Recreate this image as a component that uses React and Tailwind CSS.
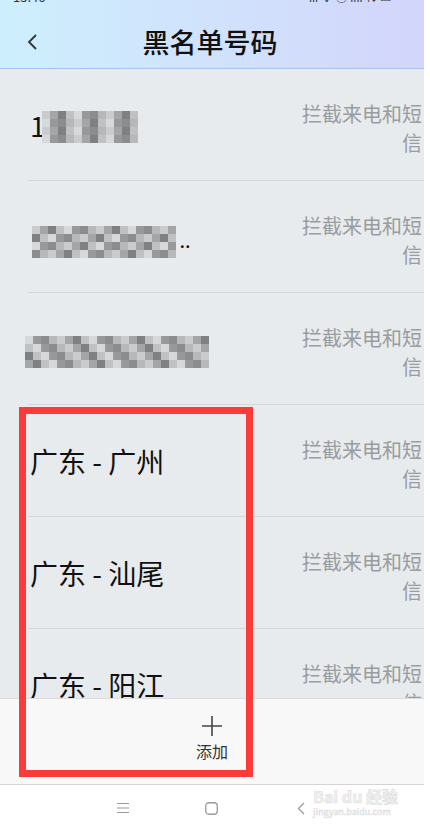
import React from 'react';

const FONT = { fontFamily: '"Noto Sans CJK SC", "Noto Sans", sans-serif' };

const GRAYS = ['#c9cbcd', '#a3a5a7', '#8a8c8e', '#b6b8ba', '#d6d8da', '#97999b', '#7e8082', '#bfc1c3'];

// pixelated block used to hide phone numbers
const Mosaic = ({ cols, rows, cell = 8, seed = 1 }) => {
  const cells = [];
  let s = seed;
  for (let r = 0; r < rows; r++) {
    for (let c = 0; c < cols; c++) {
      s = (s * 9301 + 49297) % 233280;
      cells.push(
        <rect key={r + '-' + c} x={c * cell} y={r * cell} width={cell} height={cell} fill={GRAYS[s % GRAYS.length]} />
      );
    }
  }
  return (
    <svg width={cols * cell} height={rows * cell} className="block">
      {cells}
    </svg>
  );
};

const rows = [
  { id: 1, text: '100', mosaic: { cols: 12, rows: 4, seed: 3, left: 12, top: 0 } },
  { id: 2, text: '(', tail: '..', mosaic: { cols: 18, rows: 4, seed: 11, left: 2, top: 3 } },
  { id: 3, text: '1', mosaic: { cols: 23, rows: 4, seed: 7, left: -5, top: 1 } },
  { id: 4, text: '广东 - 广州' },
  { id: 5, text: '广东 - 汕尾' },
  { id: 6, text: '广东 - 阳江' },
];

const Row = ({ row }) => (
  <div className="ml-[28px] h-[112px] shrink-0 border-b border-[#d5d8db] flex items-center justify-between pl-[2px] pr-[2px]">
    <div className="relative flex items-center text-[28px] leading-none text-[#111]">
      <span>{row.text}</span>
      {row.mosaic && (
        <div className="absolute" style={{ left: row.mosaic.left, top: row.mosaic.top }}>
          <Mosaic cols={row.mosaic.cols} rows={row.mosaic.rows} seed={row.mosaic.seed} />
        </div>
      )}
      {row.tail && <span className="ml-[140px] text-[20px] mt-[6px]">{row.tail}</span>}
    </div>
    <div className="w-[122px] text-right text-[20px] leading-[29px] text-[#9a9c9e] pt-[6px]">拦截来电和短信</div>
  </div>
);

export default function App() {
  return (
    <div className="w-[430px] h-[833px] bg-white overflow-hidden" style={FONT}>
      <div className="w-[424px] h-full flex flex-col">
        {/* header */}
        <div className="shrink-0 bg-gradient-to-r from-[#cdeffd] to-[#d3d5fb] border-b border-[#a9c4f2]">
          <div className="h-[4px] overflow-hidden flex justify-between px-[13px]">
            <span className="-mt-[10px] text-[13px] leading-[14px] text-[#333]">15:46</span>
            <span className="-mt-[10px] text-[12px] leading-[14px] text-[#333] mr-[20px]">ııı ◊ ○ ıııı ⇅ ▭</span>
          </div>
          <div className="h-[64px] pt-[12px] flex items-center relative">
            <svg width="12" height="18" viewBox="0 0 12 18" className="ml-[26px]">
              <path d="M10 2 L3 9 L10 16" fill="none" stroke="#333" strokeWidth="1.8" />
            </svg>
            <div className="absolute left-0 right-0 top-[12px] bottom-0 flex items-center justify-center pointer-events-none">
              <span className="text-[27px] font-medium text-[#111] ml-[-4px]">黑名单号码</span>
            </div>
          </div>
        </div>

        {/* list */}
        <div className="flex-1 bg-[#e8ebee] overflow-hidden flex flex-col">
          {rows.map(r => <Row key={r.id} row={r} />)}
        </div>

        {/* add bar */}
        <div className="h-[86px] shrink-0 bg-[#f8f8f8] border-t border-[#d9dbdd] flex flex-col items-center pt-[16px]">
          <svg width="22" height="22" viewBox="0 0 22 22">
            <path d="M11 1 V21 M1 11 H21" stroke="#444" strokeWidth="1.6" />
          </svg>
          <span className="mt-[4px] text-[16px] leading-[20px] text-[#333]">添加</span>
        </div>

        {/* system nav */}
        <div className="h-[49px] shrink-0 bg-white border-t border-[#d4d4d4] relative flex items-center">
          <div className="w-full flex items-center pl-[117px] -mt-[2px]">
            <svg width="12" height="12" viewBox="0 0 12 12">
              <path d="M0 1.5 H12 M0 6 H12 M0 10.5 H12" stroke="#9b9b9b" strokeWidth="1.2" />
            </svg>
            <svg width="13" height="13" viewBox="0 0 13 13" className="ml-[76px]">
              <rect x="0.75" y="0.75" width="11.5" height="11.5" rx="3" fill="none" stroke="#9b9b9b" strokeWidth="1.3" />
            </svg>
            <svg width="8" height="13" viewBox="0 0 8 13" className="ml-[79px]">
              <path d="M7 1 L1.5 6.5 L7 12" fill="none" stroke="#9b9b9b" strokeWidth="1.3" />
            </svg>
          </div>
          <div className="absolute left-[313px] top-[3px] flex flex-col items-start leading-none whitespace-nowrap">
            <span className="text-[16px] font-bold text-[#f2f2f2]" style={{ WebkitTextStroke: '0.6px #dcdcdc' }}>Bai du 经验</span>
            <span className="text-[9px] text-[#e6e6e6] mt-[3px]" style={{ WebkitTextStroke: '0.3px #d8d8d8' }}>jingyan.baidu.com</span>
          </div>
        </div>
      </div>

      {/* red annotation box */}
      <div className="absolute left-[19px] top-[407px] w-[234px] h-[370px] border-[7px] border-[#fb3a3a] pointer-events-none" />
    </div>
  );
}
